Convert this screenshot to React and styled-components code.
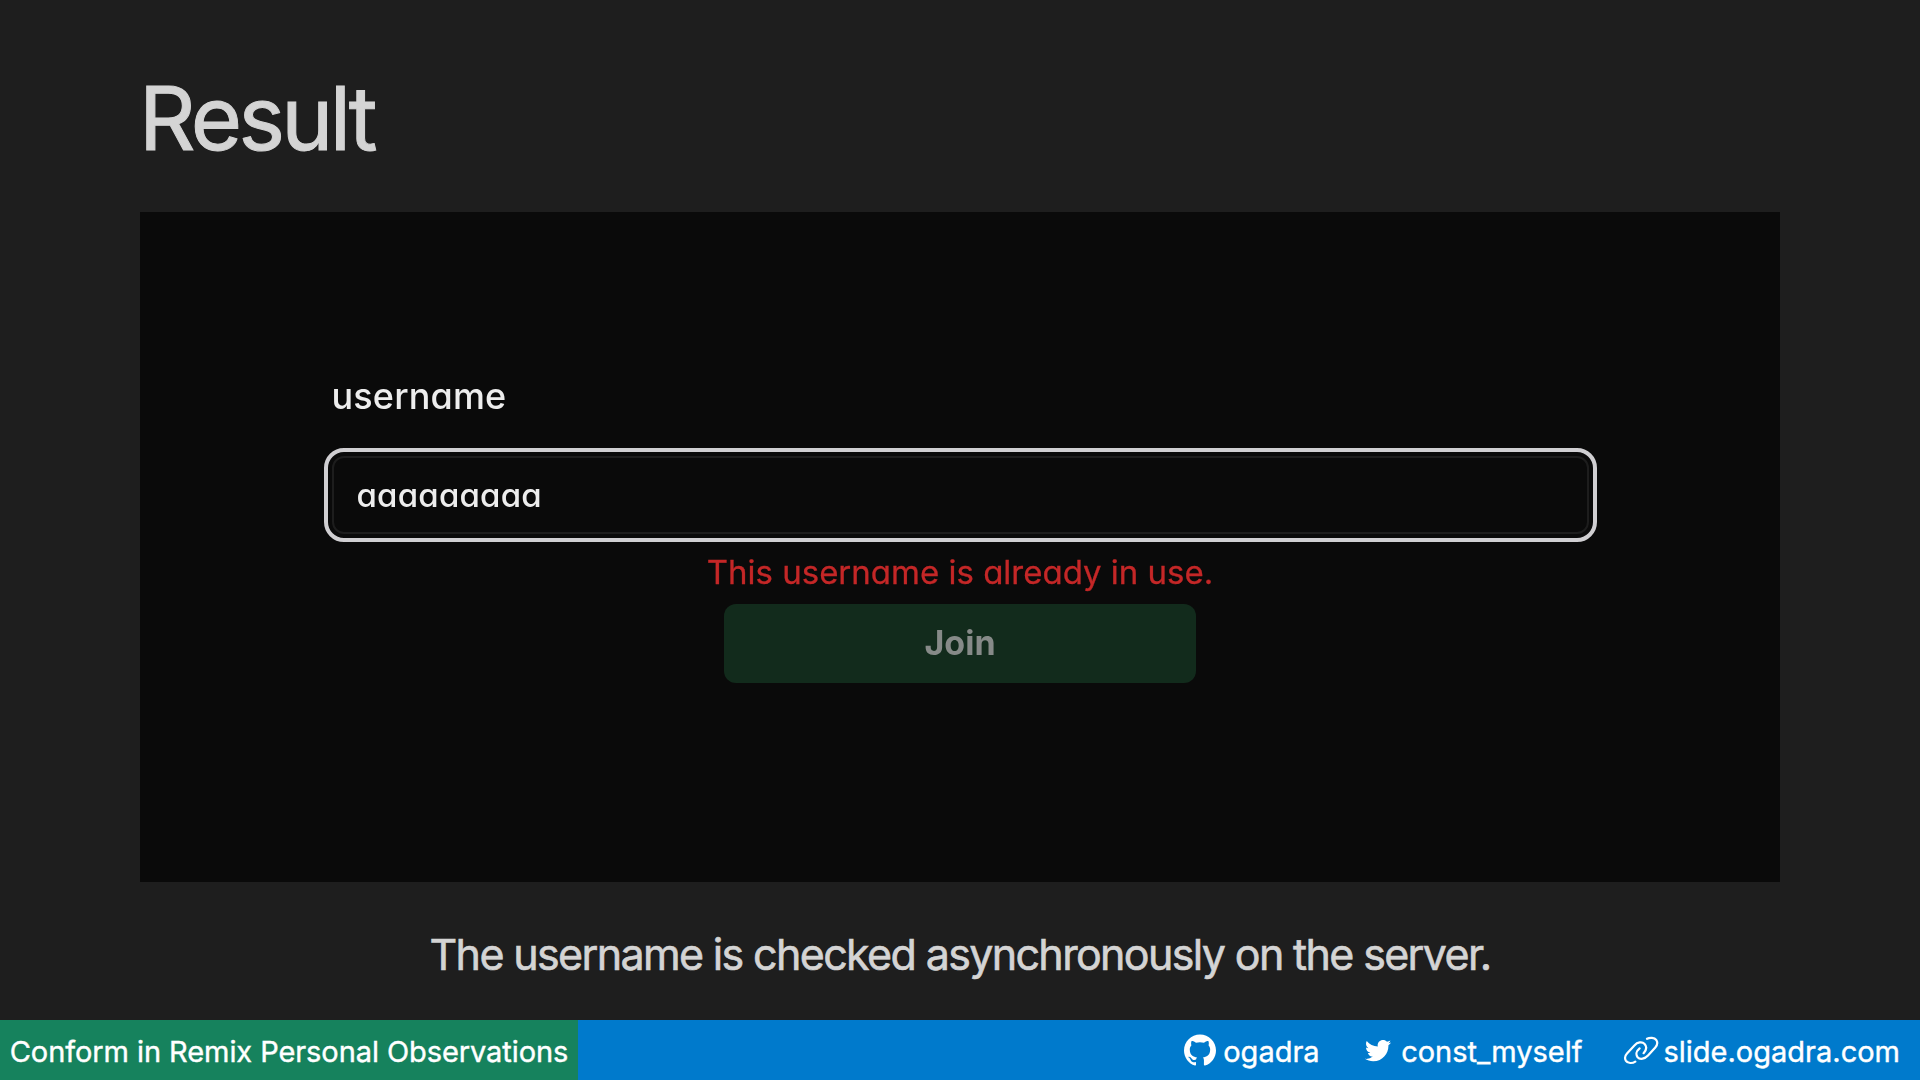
import React from 'react';
import styled, { createGlobalStyle } from 'styled-components';
import { SiGithub } from 'react-icons/si';

const GlobalStyle = createGlobalStyle`
  *, *::before, *::after { box-sizing: border-box; }
  body {
    margin: 0;
    background: #1e1e1e;
    font-family: Inter, "Liberation Sans", sans-serif;
  }
  h1, p { margin: 0; font-weight: inherit; }
`;

const Slide = styled.div`
  display: flex;
  flex-direction: column;
  width: 1920px;
  height: 1080px;
  overflow: hidden;
  background: #1e1e1e;
  color: #d4d4d4;
`;

const Content = styled.main`
  flex: 1;
  display: flex;
  flex-direction: column;
  padding: 65px 140px 0;
`;

const Title = styled.h1`
  margin: 0 0 41px -1px;
  font-size: 88px;
  font-weight: 400;
  line-height: 106px;
  letter-spacing: -3.6px;
  -webkit-text-stroke: 1px currentColor;
`;

const Panel = styled.section`
  height: 670px;
  padding-top: 162px;
  background: #0a0a0a;
`;

const Form = styled.div`
  display: flex;
  flex-direction: column;
  align-items: center;
  font-feature-settings: "cv11";
  filter: blur(0.5px);
`;

const Label = styled.label`
  width: 1273px;
  padding-left: 8px;
  margin-bottom: 29px;
  color: #ededed;
  font-size: 36px;
  font-weight: 500;
  line-height: 45px;
  letter-spacing: 0.15px;
`;

const FocusRing = styled.div`
  display: flex;
  width: 1273px;
  height: 94px;
  padding: 4px;
  border: 4px solid #d0cfd2;
  border-radius: 20px;
`;

const Field = styled.div`
  flex: 1;
  display: flex;
  align-items: center;
  padding-left: 23px;
  border: 2px solid #1d1d1d;
  border-radius: 12px;
  color: #ededed;
  font-size: 33px;
  font-weight: 500;
  letter-spacing: 0.2px;
`;

const ErrorText = styled.p`
  margin: 10px 0 12px;
  color: #c42727;
  font-size: 33px;
  line-height: 40px;
  -webkit-text-stroke: 0.3px currentColor;
`;

const JoinButton = styled.div`
  display: flex;
  align-items: center;
  justify-content: center;
  width: 472px;
  height: 79px;
  padding-bottom: 2px;
  border-radius: 12px;
  background: #122b1c;
  color: #868a88;
  font-size: 34px;
  font-weight: 650;
`;

const Caption = styled.p`
  margin-top: 45px;
  text-align: center;
  white-space: nowrap;
  font-size: 43px;
  font-weight: 400;
  line-height: 54px;
  letter-spacing: -1.65px;
  -webkit-text-stroke: 0.6px currentColor;
`;

const Footer = styled.footer`
  display: flex;
  justify-content: space-between;
  height: 60px;
  background: #007acc;
  color: #fff;
  font-size: 29px;
  font-weight: 400;
  white-space: nowrap;
  -webkit-text-stroke: 0.4px currentColor;
`;

const DeckName = styled.div`
  display: flex;
  align-items: center;
  justify-content: center;
  width: 578px;
  padding-top: 3px;
  background: #16825d;
  letter-spacing: -0.08px;
`;

const Links = styled.nav`
  display: flex;
  align-items: center;
  padding-right: 20px;
`;

const LinkItem = styled.div`
  display: flex;
  align-items: center;
  gap: ${(p) => p.$gap}px;
  margin-right: ${(p) => p.$after || 0}px;
  svg { display: block; flex: none; }
`;

const LinkText = styled.span`
  padding-top: 3px;
`;

const TwitterIcon = () => (
  <svg width="30" height="30" viewBox="0 0 24 24" fill="currentColor">
    <path d="M22.46 6c-.77.35-1.6.58-2.46.69.88-.53 1.56-1.37 1.88-2.38-.83.5-1.75.85-2.72 1.05C18.37 4.5 17.26 4 16 4c-2.35 0-4.27 1.92-4.27 4.29 0 .34.04.67.11.98C8.28 9.09 5.11 7.38 3 4.79c-.37.63-.58 1.37-.58 2.15 0 1.49.75 2.81 1.91 3.56-.71 0-1.37-.2-1.95-.5v.03c0 2.08 1.48 3.82 3.44 4.21a4.22 4.22 0 0 1-1.93.07 4.28 4.28 0 0 0 4 2.98 8.52 8.52 0 0 1-5.33 1.84c-.34 0-.68-.02-1.02-.06C3.44 20.29 5.7 21 8.12 21 16 21 20.33 14.46 20.33 8.79c0-.19 0-.37-.01-.56.84-.6 1.56-1.36 2.14-2.23z" />
  </svg>
);

const ChainIcon = () => (
  <svg
    width="36"
    height="30"
    viewBox="12 7 36 30"
    fill="none"
    stroke="currentColor"
    strokeWidth="2.2"
    strokeLinecap="round"
  >
    <path d="M24.3 33.6 C21.5 35.6 16.6 35.6 14.8 32.6 C13.4 30 14 27.6 16 25.4 L23.4 17.4 C26.4 14.2 31 13.2 33.6 15.9 C35.8 18.3 35.4 22 32.6 25.2" />
    <path d="M36 10.8 C38.8 9.3 43.4 9.4 45.3 12 C46.9 14.5 46.3 17.2 44.3 19.5 L37 27.6 C34 30.9 29 32 26.6 29.2 C24.5 26.5 25.4 23 28.6 20.4" />
  </svg>
);

export default function App() {
  return (
    <Slide>
      <GlobalStyle />
      <Content>
        <Title>Result</Title>
        <Panel>
          <Form>
            <Label>username</Label>
            <FocusRing>
              <Field>aaaaaaaaa</Field>
            </FocusRing>
            <ErrorText>This username is already in use.</ErrorText>
            <JoinButton>Join</JoinButton>
          </Form>
        </Panel>
        <Caption>The username is checked asynchronously on the server.</Caption>
      </Content>
      <Footer>
        <DeckName>Conform in Remix Personal Observations</DeckName>
        <Links>
          <LinkItem $gap={7.5} $after={43.5}>
            <SiGithub size={32} />
            <LinkText>ogadra</LinkText>
          </LinkItem>
          <LinkItem $gap={8} $after={41}>
            <TwitterIcon />
            <LinkText>const_myself</LinkText>
          </LinkItem>
          <LinkItem $gap={4}>
            <ChainIcon />
            <LinkText>slide.ogadra.com</LinkText>
          </LinkItem>
        </Links>
      </Footer>
    </Slide>
  );
}
